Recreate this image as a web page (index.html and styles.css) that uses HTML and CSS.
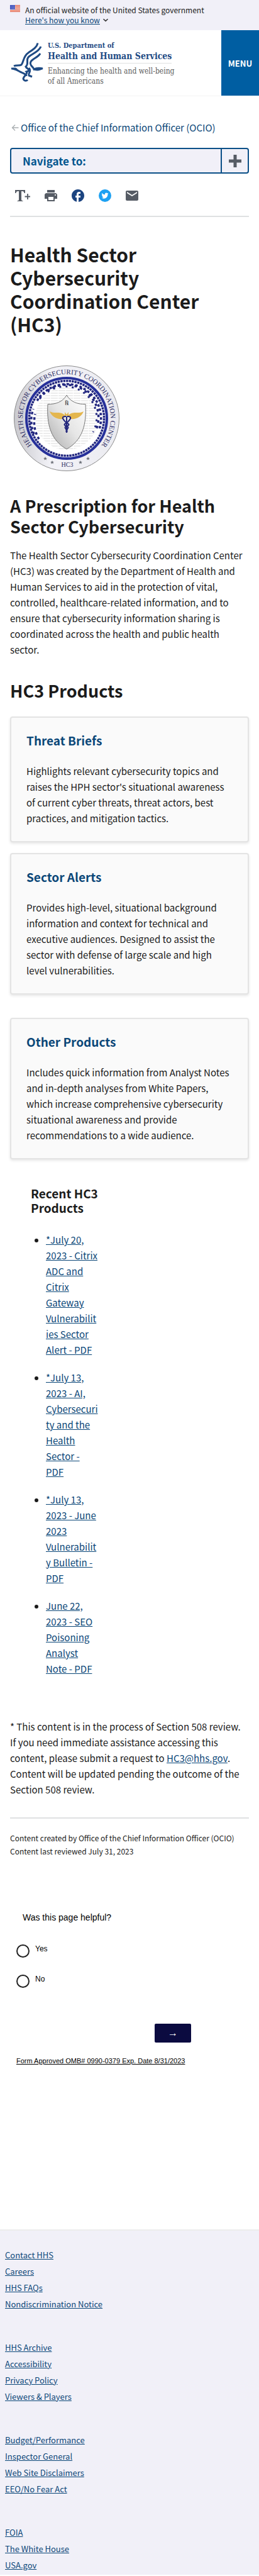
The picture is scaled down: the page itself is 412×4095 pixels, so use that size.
FILE: index.html
```html
<!DOCTYPE html>
<html lang="en">
<head>
<meta charset="utf-8">
<meta name="viewport" content="width=device-width, initial-scale=1">
<title>Health Sector Cybersecurity Coordination Center (HC3)</title>
<link rel="stylesheet" href="styles.css">
</head>
<body>
<div class="banner">
  <svg class="flag" viewBox="0 0 16 11" aria-hidden="true">
    <rect width="16" height="11" fill="#fff"/>
    <path d="M0 .5h16M0 2.5h16M0 4.5h16M0 6.5h16M0 8.5h16M0 10.5h16" stroke="#db3e1f"/>
    <rect width="8" height="7" fill="#1e33b1"/>
    <path d="M1 1.5h7M1 3.5h7M1 5.5h7" stroke="#fff" stroke-dasharray="1 1"/>
  </svg>
  <div class="banner-text">
    <p>An official website of the United States government</p>
    <button class="banner-link" type="button"><span>Here's how you know</span>
      <svg viewBox="0 0 10 6" aria-hidden="true"><path d="M1.5 1.2 5 4.4l3.500-3.200" fill="none" stroke="#333" stroke-width="1.500"/></svg>
    </button>
  </div>
</div>
<header class="header">
  <a class="brand" href="#">
    <svg class="eagle" viewBox="0 0 52 64" aria-hidden="true">
      <g fill="none" stroke="#1f4b84" stroke-width="3">
        <path d="M43 1.500C42 8 35 12 28 17C20 22 21 31 17 36C14 38 9 36 5 38"/>
        <path d="M48 7C45 15 35 18 29 23C23 28 30 34 24 39C26 43 30 42 28 46L25 47C28 50 21 53 20 58C21 62 25 62 27 60"/>
        <path d="M47 18C44 24 35 26 32 31C29 37 36 39 37 43C41 41 46 41 51 42"/>
        <path d="M1 42C8 42 12 46 17 48C21 50 25 51 25 54"/>
        <path d="M29 41C34 47 27 49 29 53L34 55"/>
      </g>
      <path d="M36 44c5-3 10-3 16-2-4 3-8 4-14 3zM0 41c4 0 6-1 9 0l4 4-5-1z" fill="#1f4b84"/>
    </svg>
    <span class="brand-text">
      <span class="brand-dept">U.S. Department of</span>
      <span class="brand-name">Health and Human Services</span>
      <span class="brand-tag">Enhancing the health and well-being<br>of all Americans</span>
    </span>
  </a>
  <button class="menu" type="button">MENU</button>
</header>
<main class="main">
  <a class="crumb" href="#"><svg viewBox="0 0 12 12" aria-hidden="true"><path d="M11.500 6H1.500M6 1.500 1.500 6 6 10.500" fill="none" stroke="#a9aeb1" stroke-width="1.300"/></svg>Office of the Chief Information Officer (OCIO)</a>
  <button class="navigate" type="button">
    <span class="navigate-label">Navigate to:</span>
    <span class="navigate-plus"><svg viewBox="0 0 20 20" aria-hidden="true"><path d="M10 0v20M0 10h20" stroke="#565c65" stroke-width="5"/></svg></span>
  </button>
  <div class="tools">
    <button type="button" aria-label="Text size"><svg viewBox="0 0 24 20"><path d="M0 1h16v5h-1.500c-.3-2.200-1-3-3-3H10v13c0 1.500.5 2 2.500 2.200V19h-9v-.8C5.500 18 6 17.500 6 16V3H4.500c-2 0-2.700.8-3 3H0z" fill="#565c65"/><path d="M20 7v9M15.500 11.500h8.500" stroke="#565c65" stroke-width="1.800"/></svg></button>
    <button type="button" aria-label="Print"><svg viewBox="2 3 20 18"><path d="M19 8H5c-1.660 0-3 1.340-3 3v6h4v4h12v-4h4v-6c0-1.660-1.340-3-3-3zm-3 11H8v-5h8v5zm3-7c-.55 0-1-.45-1-1s.45-1 1-1 1 .45 1 1-.45 1-1 1zm-1-9H6v4h12V3z" fill="#565c65"/></svg></button>
    <a href="#" aria-label="Facebook"><svg viewBox="2 2 20 20"><path d="M22 12c0-5.520-4.480-10-10-10S2 6.480 2 12c0 4.840 3.440 8.870 8 9.800V15H8v-3h2V9.500C10 7.570 11.570 6 13.500 6H16v3h-2c-.55 0-1 .45-1 1v2h3v3h-3v6.950c5.050-.5 9-4.760 9-9.950z" fill="#1c4480"/></svg></a>
    <a href="#" aria-label="Twitter"><svg viewBox="0 0 20 20"><circle cx="10" cy="10" r="10" fill="#1da1f2"/><path d="M15.500 6.600c-.4.200-.8.300-1.300.4.500-.3.800-.7 1-1.200-.5.200-.9.400-1.400.5a2.260 2.260 0 0 0-3.900 2.100A6.400 6.400 0 0 1 5.200 6a2.260 2.260 0 0 0 .7 3c-.4 0-.7-.1-1-.3 0 1.100.8 2 1.800 2.300-.3.100-.7.100-1 0 .3.900 1.100 1.600 2.100 1.600A4.500 4.500 0 0 1 4.400 13.600c5 3 10.200-.6 9.990-5.900.4-.3.800-.7 1.110-1.100z" fill="#fff"/></svg></a>
    <a href="#" aria-label="Email"><svg viewBox="2 4 20 16"><path d="M20 4H4c-1.100 0-2 .9-2 2v12c0 1.100.9 2 2 2h16c1.100 0 2-.9 2-2V6c0-1.100-.9-2-2-2zm0 4-8 5-8-5V6l8 5 8-5v2z" fill="#565c65"/></svg></a>
  </div>
  <h1>Health Sector Cybersecurity Coordination Center (HC3)</h1>
  <svg class="seal" viewBox="0 0 170 170" role="img" aria-label="HC3 seal">
    <defs>
      <linearGradient id="rim" x1="0" y1="0" x2="1" y2="0"><stop offset="0" stop-color="#c9c9ce"/><stop offset=".35" stop-color="#f3f3f8"/><stop offset="1" stop-color="#ebebf0"/></linearGradient>
      <linearGradient id="shield" x1="0" y1="1" x2="1" y2="0"><stop offset="0" stop-color="#aaa"/><stop offset=".5" stop-color="#e6e6e6"/><stop offset="1" stop-color="#fff"/></linearGradient>
      <path id="arc" d="M42 140A70 70 0 1 1 128 140"/>
      <pattern id="lines" width="12" height="4" patternUnits="userSpaceOnUse"><path d="M0 1h11" stroke="#d9d9d9"/></pattern>
    </defs>
    <circle cx="85" cy="85" r="83.500" fill="url(#rim)" stroke="#8b8b8b"/>
    <circle cx="85" cy="85" r="64" fill="#fff" stroke="#26309a" stroke-width="4"/>
    <circle cx="85" cy="85" r="50" fill="url(#lines)"/>
    <g fill="none" stroke="#22277f">
      <circle cx="85" cy="85" r="59.500" stroke-width="3.500" stroke-dasharray="3.500 1"/>
      <path d="M38 57A55 55 0 0 1 132 57A55 55 0 0 1 137 102" stroke-width="3.500" stroke-dasharray="4 3"/>
      <path d="M42 54A51 51 0 0 1 127 55A51 51 0 0 1 131 105" stroke-width="3.500" stroke-dasharray="4 5"/>
      <path d="M55 43A49 49 0 0 1 112 44A49 49 0 0 1 127 107" stroke-width="3" stroke-dasharray="3 7"/>
      <path d="M33 110A55 55 0 0 1 32 70M41 118A52 52 0 0 1 35 78" stroke-width="3.500" stroke-dasharray="4 4"/>
    </g>
    <path d="M85 48C79 59 67 63 55 62.500C53 95 60 120 85 134C110 120 117 95 115 62.500C103 63 91 59 85 48z" fill="url(#shield)" stroke="#777"/>
    <path d="M83 81C75 72 67 79 58 74C61 82 69 87 79 86zM87 81C95 72 103 79 112 74C109 82 101 87 91 86zM82 75l3 4 3-4v6h-6z" fill="#e4b64e"/>
    <path d="M84 82C73 81 82 91 88 94C91 97 80 97 83 101C90 103 82 105 85 107M86 82C97 81 88 91 82 94C79 97 90 97 87 101C80 103 88 105 85 107M85 82v26" fill="none" stroke="#23277c" stroke-width="2"/>
    <text class="seal-rx" x="85" y="64" text-anchor="middle">℞</text>
    <text class="seal-text"><textPath href="#arc" startOffset="50%" text-anchor="middle">HEALTH SECTOR CYBERSECURITY COORDINATION CENTER</textPath></text>
    <text class="seal-hc3" x="86" y="162" text-anchor="middle">HC3</text>
    <path id="star" d="m51 146 .9 2h2.100l-1.700 1.300.7 2.200-2-1.300-2 1.300.7-2.200-1.700-1.300h2.100z" fill="#6c7078"/>
    <use href="#star" x="11" y="6"/><use href="#star" x="56" y="6"/><use href="#star" x="68"/>
  </svg>
  <h2>A Prescription for Health Sector Cybersecurity</h2>
  <p class="intro">The Health Sector Cybersecurity Coordination Center (HC3) was created by the Department of Health and Human Services to aid in the protection of vital, controlled, healthcare-related information, and to ensure that cybersecurity information sharing is coordinated across the health and public health sector.</p>
  <h2>HC3 Products</h2>
  <div class="cards">
    <section class="card">
      <h3><a href="#">Threat Briefs</a></h3>
      <p>Highlights relevant cybersecurity topics and raises the HPH sector's situational awareness of current cyber threats, threat actors, best practices, and mitigation tactics.</p>
    </section>
    <section class="card">
      <h3><a href="#">Sector Alerts</a></h3>
      <p>Provides high-level, situational background information and context for technical and executive audiences. Designed to assist the sector with defense of large scale and high level vulnerabilities.</p>
    </section>
    <section class="card card-other">
      <h3><a href="#">Other Products</a></h3>
      <p>Includes quick information from Analyst Notes and in-depth analyses from White Papers, which increase comprehensive cybersecurity situational awareness and provide recommendations to a wide audience.</p>
    </section>
  </div>
  <section class="recent">
    <h3>Recent HC3 Products</h3>
    <ul>
      <li><a href="#">*July 20, 2023 - Citrix ADC and Citrix Gateway Vulnerabilities Sector Alert - PDF</a></li>
      <li><a href="#">*July 13, 2023 - AI, Cybersecurity and the Health Sector - PDF</a></li>
      <li><a href="#">*July 13, 2023 - June 2023 Vulnerability Bulletin - PDF</a></li>
      <li><a href="#">June 22, 2023 - SEO Poisoning Analyst Note - PDF</a></li>
    </ul>
  </section>
  <div class="note">
    <p>* This content is in the process of Section 508 review. If you need immediate assistance accessing this content, please submit a request to <a href="#">HC3@hhs.gov</a>. Content will be updated pending the outcome of the Section 508 review.</p>
  </div>
  <div class="meta">
    <p>Content created by Office of the Chief Information Officer (OCIO)</p>
    <p>Content last reviewed July 31, 2023</p>
  </div>
  <form class="survey">
    <fieldset>
      <legend>Was this page helpful?</legend>
      <label><input type="radio" name="helpful"><span>Yes</span></label>
      <label><input type="radio" name="helpful"><span>No</span></label>
    </fieldset>
    <button class="next" type="button" aria-label="Next">→</button>
    <a class="omb" href="#">Form Approved OMB# 0990-0379 Exp. Date 8/31/2023</a>
  </form>
</main>
<footer class="footer">
  <ul><li><a href="#">Contact HHS</a></li><li><a href="#">Careers</a></li><li><a href="#">HHS FAQs</a></li><li><a href="#">Nondiscrimination Notice</a></li></ul>
  <ul><li><a href="#">HHS Archive</a></li><li><a href="#">Accessibility</a></li><li><a href="#">Privacy Policy</a></li><li><a href="#">Viewers &amp; Players</a></li></ul>
  <ul><li><a href="#">Budget/Performance</a></li><li><a href="#">Inspector General</a></li><li><a href="#">Web Site Disclaimers</a></li><li><a href="#">EEO/No Fear Act</a></li></ul>
  <ul><li><a href="#">FOIA</a></li><li><a href="#">The White House</a></li><li><a href="#">USA.gov</a></li></ul>
</footer>
</body>
</html>
```
FILE: styles.css
```css
* { box-sizing: border-box; }
body {
  margin: 0;
  background: #fff;
  color: #1b1b1b;
  font-family: "Noto Sans CJK SC", "Noto Sans", sans-serif;
  font-size: 15px;
  line-height: 25px;
}
h1, h2, h3, p, ul { margin: 0; padding: 0; }
button { margin: 0; padding: 0; border: 0; background: none; font: inherit; color: inherit; cursor: pointer; }
svg { display: block; }
a { color: #0b4778; }

.banner { display: flex; gap: 8px; padding: 8px 16px; background: #f1f0f8; font-size: 12px; line-height: 16px; }
.flag { width: 16px; height: 11px; }
.banner-link { display: flex; align-items: center; gap: 4px; color: #0b4778; }
.banner-link span { text-decoration: underline; }
.banner-link svg { width: 10px; height: 6px; }

.header { display: flex; justify-content: space-between; min-height: 105px; border-bottom: 1px solid #f3f3f3; }
.brand { display: flex; gap: 7px; padding: 17px 0 0 17px; text-decoration: none; }
.eagle { flex: none; width: 52px; height: 66px; padding-top: 2px; }
.brand-text { display: flex; flex-direction: column; align-items: flex-start; font-family: "DejaVu Serif Condensed", "DejaVu Serif", serif; color: #1f4b84; white-space: nowrap; }
.brand-dept { font-size: 11px; line-height: 16px; font-weight: bold; }
.brand-name { padding-bottom: 2px; border-bottom: 1px solid #dfe1e2; font-size: 14px; line-height: 17px; font-weight: bold; }
.brand-tag { padding-top: 4px; font-size: 12px; line-height: 16px; color: #5c5c5c; }
.menu { width: 60px; background: #005ea2; color: #fff; font-size: 13px; font-weight: bold; }

.main { padding: 37px 16px 0; }
.crumb { display: flex; align-items: center; gap: 3px; padding-left: 2px; text-decoration: none; }
.crumb svg { width: 12px; height: 12px; }
.navigate { display: flex; width: 100%; margin-top: 20px; border: 2px solid #0b4f87; border-radius: 4px; background: #f1f0f8; }
.navigate-label { flex: 1; padding-left: 18px; text-align: left; font-size: 17px; line-height: 37px; font-weight: bold; color: #00558f; }
.navigate-plus { display: grid; place-items: center; width: 43px; height: 37px; border-left: 2px solid #0b4f87; }
.navigate-plus svg { width: 20px; height: 20px; }
.tools { display: flex; gap: 23px; padding: 25px 8px 22px; border-bottom: 2px solid #dfe1e2; }
.tools svg { width: 20px; height: 20px; }
.tools button:first-child svg { width: 24px; }

h1 { margin-top: 41px; font-size: 30px; line-height: 37px; }
.seal { width: 170px; height: 170px; margin: 46px 0 37px 5px; }
.seal-text { font: 11px "Liberation Serif", serif; fill: #2b2b62; }
.seal-hc3 { font: 10px "Liberation Serif", serif; fill: #2b2b62; }
.seal-rx { font: 10px "DejaVu Serif", serif; fill: #333; }
h2 { font-size: 27px; line-height: 33px; }
.intro { margin: 17px 0 36px; }

.cards { display: flex; flex-direction: column; gap: 17px; margin-top: 25px; }
.card { padding: 24px; border: 2px solid #e4e4e4; border-radius: 4px; background: #fafafa; box-shadow: 0 2px 4px #0000001a; }
.card-other { margin-top: 20px; }
h3 { font-size: 19px; line-height: 23px; }
.card a { text-decoration: none; }
.card p { margin-top: 25px; }

.recent { width: 107px; margin: 42px 0 0 33px; }
.recent ul { display: flex; flex-direction: column; gap: 19px; margin-top: 27px; padding-left: 24px; }
.recent li { overflow-wrap: anywhere; }
.note { margin-top: 67px; padding-bottom: 32px; border-bottom: 2px solid #dfe1e2; }
.note p { padding-right: 8px; }
.meta { margin-top: 20px; font-size: 12px; line-height: 21px; }

.survey { display: flex; flex-direction: column; margin-top: 85px; padding: 0 10px; font-family: "Liberation Sans", Arial, sans-serif; color: #000; }
.survey fieldset { display: flex; flex-direction: column; gap: 27px; margin: 0; padding: 0; border: 0; }
.survey legend { margin-bottom: 33px; padding: 0 10px; font-size: 14px; line-height: 20px; }
.survey label { display: flex; gap: 9px; font-size: 12px; line-height: 15px; }
.survey input { appearance: none; width: 21px; height: 21px; margin: 0; border: 2px solid #222; border-radius: 50%; background: #fff; }
.next { width: 58px; height: 30px; margin: 57px 0 0 220px; border-radius: 2px; background: #0b0b40; color: #fff; font-size: 16px; line-height: 30px; }
.omb { margin-top: 21px; font-size: 11px; line-height: 16px; color: #000; }

.footer { display: flex; flex-direction: column; gap: 43px; margin-top: 260px; padding: 26px 8px 2px; border-top: 2px solid #ececec; background: #f1f0f8; font-size: 13px; line-height: 26px; }
.footer ul { list-style: none; }
```
